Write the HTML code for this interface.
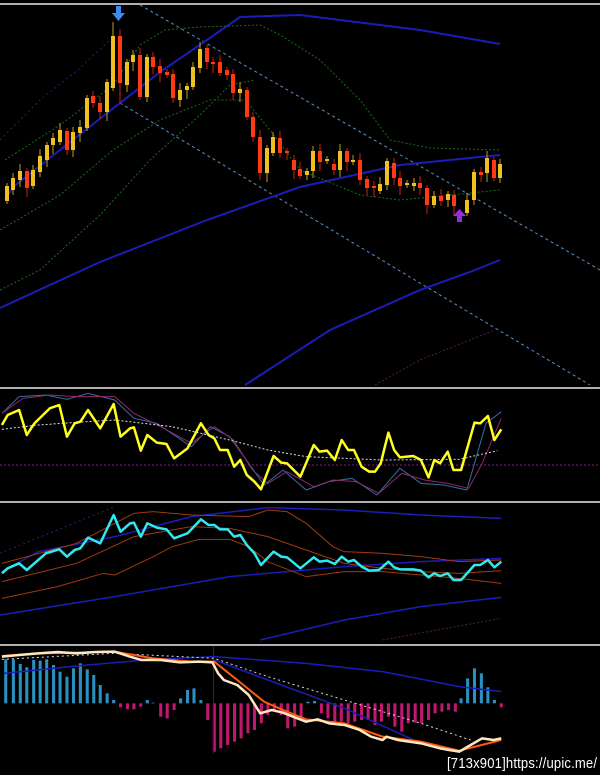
<!DOCTYPE html>
<html><head><meta charset="utf-8"><style>
html,body{margin:0;padding:0;background:#000;width:600px;height:775px;overflow:hidden}
svg{display:block}
.t{position:absolute;left:447px;top:755px;color:#fff;font-family:"Liberation Sans",sans-serif;font-size:15px;white-space:nowrap;transform:scaleX(0.87);transform-origin:0 0;letter-spacing:0.2px}
</style></head><body>
<svg width="600" height="775" viewBox="0 0 600 775" xmlns="http://www.w3.org/2000/svg">
<rect width="600" height="775" fill="#000"/>
<rect x="0" y="3" width="600" height="2" fill="#b0b0b0"/>
<rect x="0" y="387" width="600" height="2" fill="#b0b0b0"/>
<rect x="0" y="501" width="600" height="2" fill="#b0b0b0"/>
<rect x="0" y="644" width="600" height="2" fill="#b0b0b0"/>

<g fill="none">
<polyline points="0,140 40,100 80,68 110,40" stroke="#1a2a6a" stroke-dasharray="2,3"/>
<polyline points="140,5 600,270" stroke="#5a90c8" stroke-dasharray="3,3"/>
<polyline points="120,103 590,385" stroke="#5a90c8" stroke-dasharray="3,3"/>
<polyline points="5,200 13,187 60,150 120,103 160,72 207,40 240,17 300,15 420,30 500,44" stroke="#1c1cb8" stroke-width="2"/>
<polyline points="0,308 100,262 207,220 300,187 400,165 500,155" stroke="#1c1cb8" stroke-width="2"/>
<polyline points="245,385 330,330 420,290 470,272 500,260" stroke="#1c1cb8" stroke-width="2"/>
<polyline points="5,160 60,125 113,85 140,45 165,30 200,27 260,25 280,35 320,60 360,100 390,140 430,148 500,150" stroke="#1d6a1d" stroke-dasharray="2,2"/>
<polyline points="0,230 60,195 113,150 160,120 210,100 245,100 270,130 300,170 360,195 400,200 450,195 500,190" stroke="#1d6a1d" stroke-dasharray="2,2"/>
<polyline points="0,290 40,270 100,215 150,160 200,115 230,85 255,80" stroke="#1d6a1d" stroke-dasharray="2,2"/>
<polyline points="375,385 420,360 470,340 495,330" stroke="#5a1a4a" stroke-dasharray="2,2"/>
</g>

<g id="c"></g>

<path d="M116,6 h5 v7 h4 l-6.5,8 l-6.5,-8 h4z" fill="#3c8cf0"/>
<path d="M457,222 h5 v-6 h4 l-6.5,-7 l-6.5,7 h4z" fill="#9a2ae0"/>

<line x1="0" y1="465" x2="600" y2="465" stroke="#8a1a8a" stroke-dasharray="2,2"/>
<g transform="translate(0,380) scale(0.38265,0.33333)" fill="none">
<polyline vector-effect="non-scaling-stroke" stroke="#3a6aa0" stroke-width="1" points="5,100 50,50 120,45 175,58 230,40 300,60 350,115 410,130 500,200 550,140 600,170 650,250 690,315 740,270 800,330 860,305 920,295 985,345 1045,265 1100,310 1160,315 1220,330 1270,130 1310,95"/>
<polyline vector-effect="non-scaling-stroke" stroke="#8a2a6a" stroke-width="1" points="5,100 60,55 130,45 200,50 300,50 350,100 420,140 500,190 560,140 610,180 660,270 700,310 750,275 820,320 870,300 930,305 990,340 1050,280 1110,300 1170,310 1225,325 1260,250 1310,115"/>
<polyline vector-effect="non-scaling-stroke" stroke="#ddd" stroke-width="1" stroke-dasharray="2,2" points="5,148 100,135 200,127 300,120 450,140 600,180 700,210 800,230 1000,240 1200,238 1300,212"/>
<polyline vector-effect="non-scaling-stroke" stroke="#ffff20" stroke-width="2.5" stroke-linejoin="round" points="5,135 20,105 50,90 70,165 90,130 130,85 155,75 175,170 195,130 210,125 230,90 262,145 297,72 315,170 340,145 350,142 368,212 385,165 410,188 435,192 455,235 490,205 525,130 545,165 560,175 575,210 595,210 612,260 628,240 645,285 665,305 682,328 715,228 735,248 750,250 785,290 820,195 835,215 855,212 875,240 893,180 910,210 925,210 945,260 965,275 980,275 995,250 1015,158 1030,210 1045,232 1080,228 1100,240 1120,292 1135,240 1150,250 1170,215 1185,270 1205,270 1240,128 1255,130 1275,108 1292,180 1310,148"/>
</g>

<g transform="translate(0,380) scale(0.38265,0.33333)" fill="none">
<polyline vector-effect="non-scaling-stroke" stroke="#1a2a7a" stroke-dasharray="2,3" points="0,520 300,380"/>
<polyline vector-effect="non-scaling-stroke" stroke="#1c1cb8" stroke-width="1.5" points="5,575 100,515 300,470 500,410 700,383 900,390 1100,405 1310,415"/>
<polyline vector-effect="non-scaling-stroke" stroke="#1c1cb8" stroke-width="1.5" points="0,705 300,650 600,590 900,560 1100,545 1310,535"/>
<polyline vector-effect="non-scaling-stroke" stroke="#1c1cb8" stroke-width="1.5" points="680,780 900,720 1100,680 1310,652"/>
<polyline vector-effect="non-scaling-stroke" stroke="#5a1a4a" stroke-dasharray="2,2" points="1000,780 1310,715"/>
<polyline vector-effect="non-scaling-stroke" stroke="#a03a10" points="5,550 200,490 350,400 400,395 500,405 650,410 700,390 750,395 800,430 870,500 900,515 1000,520 1100,530 1200,545 1310,540"/>
<polyline vector-effect="non-scaling-stroke" stroke="#a03a10" points="5,605 200,550 350,470 500,440 600,445 700,470 800,510 900,550 1000,565 1100,575 1200,580 1310,572"/>
<polyline vector-effect="non-scaling-stroke" stroke="#a03a10" points="5,655 150,620 270,580 300,585 400,530 450,500 520,478 600,478 650,500 700,545 800,590 900,575 1000,575 1100,585 1200,595 1310,610"/>
<polyline vector-effect="non-scaling-stroke" stroke="#30e8f0" stroke-width="2.5" stroke-linejoin="round" points="5,580 20,565 50,550 70,570 120,520 155,508 175,530 195,510 210,505 230,473 262,490 297,405 315,455 340,430 350,428 368,470 385,430 410,443 435,448 455,475 490,460 525,418 545,435 560,435 575,448 595,448 612,470 628,465 645,495 665,520 682,555 715,515 735,530 750,532 785,565 820,532 835,545 855,542 875,552 893,530 910,545 925,540 945,560 965,572 990,570 1015,545 1030,562 1045,568 1080,568 1100,572 1120,592 1135,580 1150,588 1170,580 1185,600 1205,600 1240,555 1255,555 1275,540 1292,562 1310,545"/>
</g>

<g transform="translate(0,630) scale(0.38265,0.33333)">
<g id="h"></g>
<g fill="none">
<line vector-effect="non-scaling-stroke" x1="558" y1="50" x2="558" y2="370" stroke="#1c1cb8"/>
<polyline vector-effect="non-scaling-stroke" stroke="#1c1cb8" stroke-width="1.5" points="10,130 200,108 400,88 560,80 800,100 1000,125 1200,170 1310,185"/>
<polyline vector-effect="non-scaling-stroke" stroke="#1c1cb8" stroke-width="1.5" points="560,90 700,150 900,235 1100,340 1180,365"/>
<polyline vector-effect="non-scaling-stroke" stroke="#ddd" stroke-dasharray="2,3" points="5,88 300,70 560,85 700,140 900,210 1100,280 1230,330"/>
<polyline vector-effect="non-scaling-stroke" stroke="#ff5a10" stroke-width="2" points="5,78 100,70 200,68 300,65 400,85 500,95 560,95 620,150 690,215 750,245 800,268 900,280 950,300 1000,320 1100,335 1200,362 1310,330"/>
<polyline vector-effect="non-scaling-stroke" stroke="#ffe8c0" stroke-width="2.5" stroke-linejoin="round" points="5,80 50,75 100,70 150,66 200,70 250,66 300,65 340,80 370,90 420,90 470,97 520,95 555,97 570,130 585,150 620,165 650,195 680,250 710,240 740,248 770,262 800,275 830,268 860,280 900,285 940,300 970,320 1000,330 1010,320 1040,330 1100,340 1150,355 1200,365 1230,345 1260,325 1290,330 1310,325"/>
</g>
</g>
</svg>
<div class="t">[713x901]https://upic.me/</div>
<script>
var NS="http://www.w3.org/2000/svg";
var C=[[7,186,201],[13,178,190],[20,171,180],[27,171,188,1],[33,170,186],[40,156,172],[47,145,160],[53,138,145],[60,130,142],[67,131,150,1],[73,132,150],[80,127,133],[87,98,128],[93,96,103,1],[100,103,112,1],[107,82,112],[113,36,88],[120,36,83,1],[127,62,85],[133,55,62],[140,55,97,1],[147,57,97],[153,57,67,1],[160,66,73,1],[167,72,75,1],[173,74,98,1],[180,90,100],[187,86,90],[193,67,87],[200,49,68],[207,48,62,1],[213,62,64,1],[220,62,73,1],[227,70,75,1],[233,74,93,1],[240,89,93],[247,90,117,1],[253,117,137,1],[260,137,173,1],[267,148,173],[273,137,153],[280,138,153,1],[287,151,153,1],[294,160,170,1],[300,169,176,1],[307,171,175],[313,151,171],[320,151,162,1],[327,159,161],[334,164,170,1],[340,151,170],[347,151,162,1],[353,160,162],[360,160,180,1],[367,179,188,1],[374,186,188,1],[380,184,191],[387,161,185],[394,163,178,1],[400,178,186,1],[407,183,185],[414,183,186],[420,183,188,1],[427,188,205,1],[434,196,205],[441,196,201,1],[448,194,200],[454,195,206,1],[467,200,213],[474,172,200],[481,172,175,1],[487,158,173],[494,160,178,1],[500,164,178]];
var g=document.getElementById("c");
C.forEach(function(c,i){var x=c[0],t=c[1],b=c[2],r=c[3];var col=r?"#ff3a10":"#f0c020";var wcol=r?"#d02010":"#c0a020";
var hi=t-3-(i%3)*2,lo=b+3+(i%4)*2;if(i==17)lo=103;if(i==16)hi=22;
var l=document.createElementNS(NS,"line");l.setAttribute("x1",x);l.setAttribute("x2",x);l.setAttribute("y1",hi);l.setAttribute("y2",lo);l.setAttribute("stroke",wcol);g.appendChild(l);
var R=document.createElementNS(NS,"rect");R.setAttribute("x",x-2);R.setAttribute("y",t);R.setAttribute("width",4);R.setAttribute("height",Math.max(1.5,b-t));R.setAttribute("fill",col);g.appendChild(R);});
var H="15:88 35:88 53:102 70:112 88:90 105:92 122:88 140:105 157:125 175:140 192:115 210:100 228:118 245:135 262:165 280:190 297:210 315:232 333:238 350:238 368:230 385:210 400:218 420:260 437:265 455:240 472:205 490:180 507:175 525:210 543:270 560:365 577:355 595:345 613:335 630:325 648:310 665:300 683:280 700:255 717:240 735:255 752:295 770:290 787:260 805:215 822:213 840:250 857:265 875:275 892:275 910:280 927:275 945:270 962:270 980:285 997:275 1015:260 1032:290 1050:305 1067:280 1085:278 1102:280 1120:270 1137:250 1155:245 1172:240 1190:245 1205:205 1222:145 1240:115 1258:130 1275:172 1292:210 1310:232".split(" ");
var hg=document.getElementById("h");
H.forEach(function(s){var p=s.split(":"),x=+p[0],y=+p[1];var up=y<220;var R=document.createElementNS(NS,"rect");R.setAttribute("x",x-4);R.setAttribute("width",8);R.setAttribute("y",up?y:220);R.setAttribute("height",Math.abs(220-y));R.setAttribute("fill",up?"#2a90c0":"#c01870");hg.appendChild(R);});
</script>
</body></html>
